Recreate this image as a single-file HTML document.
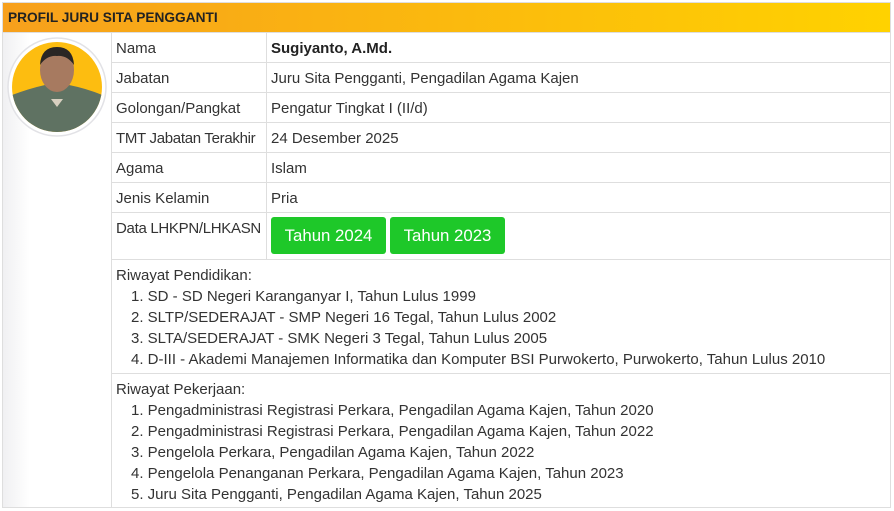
<!DOCTYPE html>
<html><head><meta charset="utf-8"><style>
*{margin:0;padding:0;box-sizing:border-box}
body{width:894px;height:511px;background:#fff;font-family:"Liberation Sans",Arial,sans-serif;font-size:15px;color:#333;position:relative;overflow:hidden}
.a{position:absolute}
.hl{position:absolute;height:1px;background:#dedede}
.vl{position:absolute;width:1px;background:#dedede}
.t{position:absolute;white-space:nowrap;line-height:16px}
.btn{position:absolute;top:217px;height:37px;background:#1ec829;border-radius:3px;color:#fff;font-size:16.8px;line-height:37px;text-align:center}
</style></head><body>
<div class="a" style="left:2px;top:2px;width:889px;height:506px;border:1px solid #dedede"></div>
<div class="a" style="left:3px;top:3px;width:887px;height:29px;background:linear-gradient(90deg,#f7a01c,#ffd200)"></div>
<div class="t" style="left:8px;top:10px;font-weight:bold;font-size:13.7px;color:#222">PROFIL JURU SITA PENGGANTI</div>
<div class="hl" style="left:2px;top:32px;width:889px"></div>
<div class="a" style="left:3px;top:33px;width:108px;height:474px;background:linear-gradient(90deg,#f0f0f2,#fff 25%)"></div>
<div class="vl" style="left:111px;top:32px;height:476px"></div>
<div class="vl" style="left:266px;top:32px;height:228px"></div>
<div class="hl" style="left:111px;top:62px;width:780px"></div>
<div class="hl" style="left:111px;top:92px;width:780px"></div>
<div class="hl" style="left:111px;top:122px;width:780px"></div>
<div class="hl" style="left:111px;top:152px;width:780px"></div>
<div class="hl" style="left:111px;top:182px;width:780px"></div>
<div class="hl" style="left:111px;top:212px;width:780px"></div>
<div class="hl" style="left:111px;top:259px;width:780px"></div>
<div class="hl" style="left:111px;top:373px;width:780px"></div>
<svg class="a" style="left:7px;top:37px" width="100" height="100" viewBox="0 0 100 100">
<circle cx="50" cy="50" r="49" fill="#fff" stroke="#e2e2e6" stroke-width="1.5"/>
<clipPath id="c"><circle cx="50" cy="50" r="45"/></clipPath>
<g clip-path="url(#c)">
<rect width="100" height="100" fill="#fdbd10"/>
<path d="M0 60 Q20 52 38 48 L62 48 Q82 52 100 60 L100 100 L0 100Z" fill="#5f7262"/>
<path d="M44 62 L50 70 L56 62Z" fill="#d8d0c0"/>
<ellipse cx="50" cy="33" rx="17" ry="22" fill="#a77a60"/>
<path d="M33 28 Q34 10 50 10 Q66 10 67 28 Q60 18 50 19 Q40 18 33 28Z" fill="#2a2624"/>
</g></svg>
<div class="t" style="left:116px;top:41px">Nama</div>
<div class="t" style="left:271px;top:41px;font-weight:bold;color:#222">Sugiyanto, A.Md.</div>
<div class="t" style="left:116px;top:71px">Jabatan</div>
<div class="t" style="left:271px;top:71px">Juru Sita Pengganti, Pengadilan Agama Kajen</div>
<div class="t" style="left:116px;top:101px">Golongan/Pangkat</div>
<div class="t" style="left:271px;top:101px">Pengatur Tingkat I (II/d)</div>
<div class="t" style="left:116px;top:131px;letter-spacing:-0.3px">TMT Jabatan Terakhir</div>
<div class="t" style="left:271px;top:131px">24 Desember 2025</div>
<div class="t" style="left:116px;top:161px">Agama</div>
<div class="t" style="left:271px;top:161px">Islam</div>
<div class="t" style="left:116px;top:191px">Jenis Kelamin</div>
<div class="t" style="left:271px;top:191px">Pria</div>
<div class="t" style="left:116px;top:221px;letter-spacing:-0.3px">Data LHKPN/LHKASN</div>
<div class="btn" style="left:271px;width:115px">Tahun 2024</div>
<div class="btn" style="left:390px;width:115px">Tahun 2023</div>
<div class="t" style="left:116px;top:268px">Riwayat Pendidikan:</div>
<div class="t" style="left:131px;top:289px">1. SD - SD Negeri Karanganyar I, Tahun Lulus 1999</div>
<div class="t" style="left:131px;top:310px">2. SLTP/SEDERAJAT - SMP Negeri 16 Tegal, Tahun Lulus 2002</div>
<div class="t" style="left:131px;top:331px">3. SLTA/SEDERAJAT - SMK Negeri 3 Tegal, Tahun Lulus 2005</div>
<div class="t" style="left:131px;top:352px">4. D-III - Akademi Manajemen Informatika dan Komputer BSI Purwokerto, Purwokerto, Tahun Lulus 2010</div>
<div class="t" style="left:116px;top:382px">Riwayat Pekerjaan:</div>
<div class="t" style="left:131px;top:403px">1. Pengadministrasi Registrasi Perkara, Pengadilan Agama Kajen, Tahun 2020</div>
<div class="t" style="left:131px;top:424px">2. Pengadministrasi Registrasi Perkara, Pengadilan Agama Kajen, Tahun 2022</div>
<div class="t" style="left:131px;top:445px">3. Pengelola Perkara, Pengadilan Agama Kajen, Tahun 2022</div>
<div class="t" style="left:131px;top:466px">4. Pengelola Penanganan Perkara, Pengadilan Agama Kajen, Tahun 2023</div>
<div class="t" style="left:131px;top:487px">5. Juru Sita Pengganti, Pengadilan Agama Kajen, Tahun 2025</div>
</body></html>
